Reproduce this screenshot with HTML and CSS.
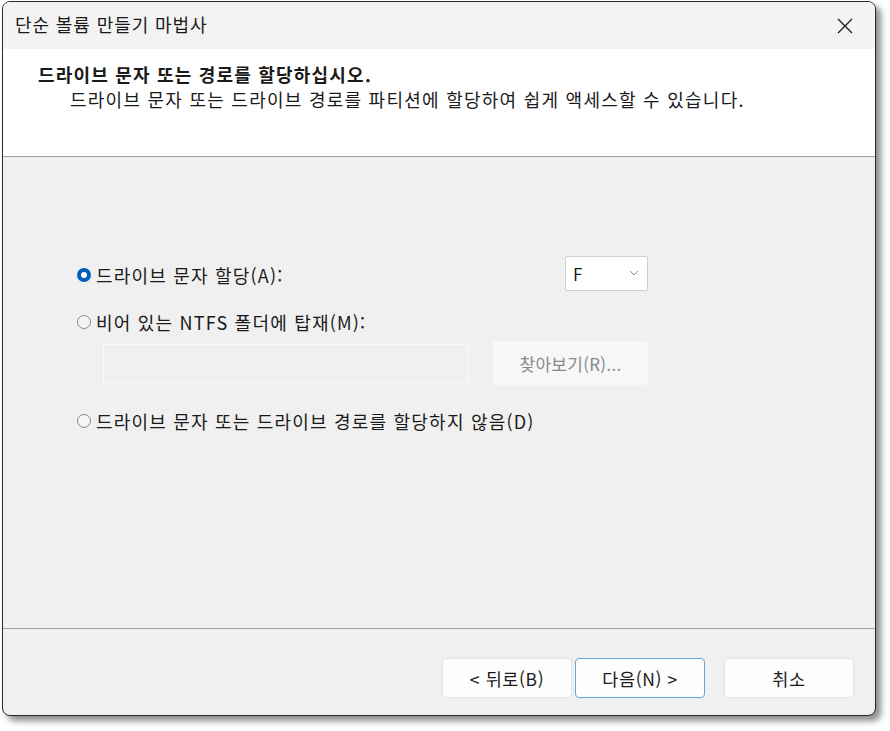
FILE: index.html
```html
<!DOCTYPE html>
<html lang="ko">
<head>
<meta charset="utf-8">
<link rel="stylesheet" href="styles.css">
</head>
<body>
<div class="window">
  <div class="titlebar">
    <span class="title">단순 볼륨 만들기 마법사</span>
    <span class="close">
      <svg width="16" height="16" viewBox="0 0 16 16"><path d="M1 1 L15 15 M15 1 L1 15" stroke="#1a1a1a" stroke-width="1.3" fill="none"/></svg>
    </span>
  </div>
  <div class="header">
    <div class="heading">드라이브 문자 또는 경로를 할당하십시오.</div>
    <div class="subheading">드라이브 문자 또는 드라이브 경로를 파티션에 할당하여 쉽게 액세스할 수 있습니다.</div>
  </div>
  <div class="body">
    <div class="row row-first">
      <label class="option"><span class="radio checked"></span><span>드라이브 문자 할당(A):</span></label>
      <div class="select"><span>F</span>
        <svg width="10" height="6" viewBox="0 0 10 6"><path d="M1 1 L5 5 L9 1" stroke="#8a8a8a" stroke-width="1" fill="none"/></svg>
      </div>
    </div>
    <div class="row row-second">
      <label class="option"><span class="radio"></span><span>비어 있는 NTFS 폴더에 탑재(M):</span></label>
    </div>
    <div class="row row-path">
      <div class="pathbox"></div>
      <div class="browse">찾아보기(R)...</div>
    </div>
    <div class="row row-third">
      <label class="option"><span class="radio"></span><span>드라이브 문자 또는 드라이브 경로를 할당하지 않음(D)</span></label>
    </div>
  </div>
  <div class="footer">
    <div class="btn">&lt; 뒤로(B)</div>
    <div class="btn primary">다음(N) &gt;</div>
    <div class="btn cancel">취소</div>
  </div>
</div>
</body>
</html>
```
FILE: styles.css
```css
* { box-sizing: border-box; }
html, body { margin: 0; padding: 0; background: #ffffff; }
body {
  width: 890px; height: 731px; overflow: hidden;
  font-family: "Noto Sans CJK KR", "Noto Sans", sans-serif;
  color: #1a1a1a;
}
.window {
  margin: 1px 0 0 2px;
  width: 874px;
  height: 715px;
  border: 1px solid #2a2a2a;
  border-radius: 8px;
  background: #f0f0f0;
  box-shadow: 5px 5px 6px rgba(0,0,0,0.45);
  overflow: hidden;
  display: flex;
  flex-direction: column;
}
.titlebar {
  height: 47px;
  background: #f3f3f3;
  display: flex;
  align-items: center;
  justify-content: space-between;
  padding: 0 22px 0 12px;
  flex: none;
}
.title { font-size: 18px; letter-spacing: 0.9px; color: #1a1a1a; line-height: 24px; margin-top: -3px; }
.close { display: flex; width: 16px; height: 16px; }
.header {
  height: 108px;
  background: #ffffff;
  border-bottom: 1px solid #a0a0a0;
  padding: 12px 0 0 35px;
  flex: none;
}
.heading { font-size: 18px; letter-spacing: 1.2px; font-weight: bold; line-height: 26px; }
.subheading { font-size: 18px; letter-spacing: 1.25px; line-height: 24px; padding-left: 32px; }
.body {
  height: 472px;
  border-bottom: 1px solid #a0a0a0;
  padding: 100px 0 0 74px;
  flex: none;
  display: flex;
  flex-direction: column;
}
.row { display: flex; align-items: center; flex: none; }
.row-first { width: 571px; justify-content: space-between; height: 36px; }
.row-second { margin-top: 16px; height: 26px; }
.row-path { margin-top: 6px; padding-left: 26px; gap: 24px; }
.row-third { margin-top: 23px; height: 26px; }
.option { display: flex; align-items: center; gap: 5px; font-size: 18px; letter-spacing: 1.2px; line-height: 24px; }
.radio {
  width: 14px; height: 14px; border-radius: 50%;
  border: 1px solid #8a8a8a; background: #f5f5f5;
  flex: none;
}
.radio.checked {
  border: 4px solid #005fb8;
  background: #ffffff;
}
.select {
  width: 83px; height: 35px; background: #ffffff;
  border: 1px solid #d0d0d0; border-radius: 2px;
  display: flex; align-items: center; justify-content: space-between;
  padding: 0 8px 0 7px;
  font-size: 17px;
  margin-top: -4px;
}
.pathbox {
  width: 366px; height: 39px;
  border: 1px solid #fafafa;
  background: #f0f0f0;
}
.browse {
  width: 155px; height: 44px;
  background: #f7f7f7;
  border-radius: 3px;
  color: #8a8a8a;
  font-size: 17px;
  letter-spacing: 0.3px;
  display: flex; align-items: center; justify-content: center;
}
.footer {
  flex: 1;
  display: flex;
  padding: 29px 0 0 439px;
}
.btn {
  width: 130px; height: 40px;
  background: #fdfdfd;
  border: 1px solid #e3e3e3;
  border-radius: 4px;
  display: flex; align-items: center; justify-content: center;
  font-size: 17.5px;
  letter-spacing: 0.6px;
}
.btn.primary { margin-left: 3px; border-color: #6aa5dc; }
.btn.cancel { margin-left: 19px; }
```
